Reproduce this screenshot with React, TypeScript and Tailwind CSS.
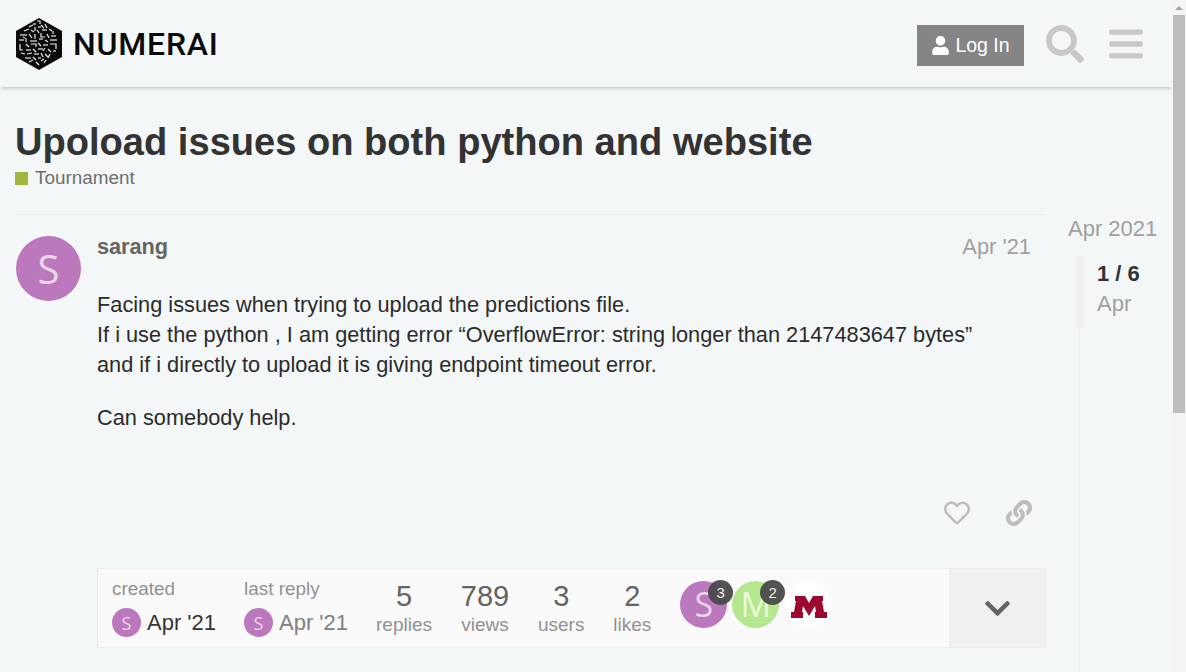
import { FaChevronDown, FaBars, FaLink, FaRegHeart, FaSearch, FaUser } from "react-icons/fa";

const dashes = [
  "M37 21h3v3", "M33 24h3", "M41 25l3 3", "M29 27l4-2", "M35 27v4", "M38 27h3", "M45 24l2 4",
  "M24 31l5-2", "M31 30l3 2", "M37 30l2 3", "M42 30h5", "M49 29l3 2", "M53 31v3",
  "M20 35h7", "M29 34l3 4", "M35 34v5", "M41 33v4h4", "M47 34l2 4", "M51 36h5",
  "M19 40h5", "M26 38v4", "M30 41h7", "M39 39h4", "M45 40l3 2", "M50 40h7", "M23 37l2 1",
  "M20 44v6h3", "M26 44l3 3", "M31 44h5v3", "M38 43l3 3", "M43 45h5", "M50 44h6v5",
  "M26 50h5", "M33 49l3 3", "M38 49h5", "M45 48l-2 3", "M48 49l3 3", "M53 51h3", "M21 53l4 1",
  "M27 54l5-1", "M34 54h5", "M41 53l2 4", "M45 54l3 3", "M50 54l-2 4", "M25 58h6", "M33 57l3 3",
  "M38 58h3", "M29 62l4-2", "M36 62l3 3", "M41 61l3-2", "M46 60l-2 3",
];

function Logo() {
  return (
    <div className="flex items-center gap-[10px]">
      <svg width="48" height="54" viewBox="15 17 48 54">
        <path d="M39 18 62 31v26L39 70 16 57V31Z" fill="#0a0a0a" />
        {dashes.map((d, i) => (
          <path key={i} d={d} stroke="#e8e8e8" strokeWidth="1.2" fill="none" />
        ))}
      </svg>
      <span className="font-['Roboto',sans-serif] text-[32px] font-medium leading-none tracking-[0.8px] text-[#0a0a0a]">
        NUMERAI
      </span>
    </div>
  );
}

function Avatar({ letter, bg, size }: { letter: string; bg: string; size: string }) {
  return (
    <div className={`${size} ${bg} flex shrink-0 items-center justify-center rounded-full font-['Open_Sans',sans-serif] text-white/70`}>
      {letter}
    </div>
  );
}

function Stat({ num, label }: { num: string; label: string }) {
  return (
    <div className="flex flex-col items-center">
      <span className="text-[29px] leading-[32px] text-[#646464]">{num}</span>
      <span className="text-[19px] leading-[26px] text-[#919191]">{label}</span>
    </div>
  );
}

function Poster({ letter, bg, count }: { letter: string; bg: string; count: string }) {
  return (
    <div className="relative">
      <Avatar letter={letter} bg={bg} size="h-[47px] w-[47px] text-[34px]" />
      <span className="absolute -right-[6px] -top-[1px] flex h-[25px] w-[25px] items-center justify-center rounded-full bg-[#4a4a4a]/95 text-[15px] text-[#eeeeee]">
        {count}
      </span>
    </div>
  );
}

export default function App() {
  return (
    <div className="flex h-[672px] w-[1186px] overflow-hidden bg-[#f4f7f8] font-['Liberation_Sans',sans-serif]">
      <div className="w-[1172px] shrink-0">
        <header className="flex h-[87px] items-center justify-between bg-[#f4f7f8] pl-[15px] pr-[27px] shadow-[0_2px_4px_-1px_rgba(0,0,0,0.25)]">
          <Logo />
          <div className="flex items-center">
            <button className="mt-[4px] flex h-[41px] w-[107px] items-center justify-center gap-[5px] bg-[#858585] text-[19.5px] text-white">
              <FaUser className="text-[19px]" />
              Log In
            </button>
            <FaSearch className="ml-[22px] text-[38px] text-[#c8c8c8]" />
            <FaBars className="ml-[23px] text-[38px] text-[#c8c8c8]" />
          </div>
        </header>

        <div className="pl-[15px]">
          <h1 className="mt-[32px] text-[38.1px] font-bold leading-[46px] text-[#333333]">
            Upoload issues on both python and website
          </h1>
          <div className="mt-px flex items-center gap-[7px] text-[18.9px] leading-[24px] text-[#6e6e6e]">
            <span className="h-[13px] w-[13px] bg-[#9eb83b]" />
            Tournament
          </div>

          <div className="mt-[24px] flex">
            <main className="w-[1031px] shrink-0 border-t border-[#e9edef]">
              <div className="flex pt-[21px]">
                <Avatar letter="S" bg="bg-[#bc78bd]" size="ml-px h-[65px] w-[65px] text-[40px]" />
                <div className="ml-4 flex-1">
                  <div className="flex justify-between pr-[15px] text-[21.7px] leading-[22px]">
                    <span className="font-bold text-[#646464]">sarang</span>
                    <span className="text-[21.9px] text-[#a0a0a0]">Apr '21</span>
                  </div>
                  <div className="mt-[32px] text-[21.75px] leading-[30.24px] text-[#2b2b2b]">
                    <p>Facing issues when trying to upload the predictions file.</p>
                    <p>If i use the python , I am getting error “OverflowError: string longer than 2147483647 bytes”</p>
                    <p>and if i directly to upload it is giving endpoint timeout error.</p>
                    <p className="mt-[22px]">Can somebody help.</p>
                  </div>
                  <div className="mt-[67px] flex justify-end gap-[36px] pr-[14px] text-[26px] text-[#bdbdbd]">
                    <FaRegHeart />
                    <FaLink />
                  </div>

                  <div className="mt-[42px] flex h-[80px] border border-[#e9edef] bg-[#fafafa]">
                    <div className="flex flex-1 items-center pl-[14px]">
                      <div className="mb-[1px] w-[132px]">
                        <div className="text-[18.9px] leading-[24px] text-[#919191]">created</div>
                        <div className="mt-[7px] flex items-center gap-[6px] text-[22px] leading-[30px] text-[#333333]">
                          <Avatar letter="S" bg="bg-[#bc78bd]" size="h-[29px] w-[29px] text-[18px]" />
                          Apr '21
                        </div>
                      </div>
                      <div className="mb-[1px] w-[132px]">
                        <div className="text-[18.9px] leading-[24px] text-[#919191]">last reply</div>
                        <div className="mt-[7px] flex items-center gap-[6px] text-[22px] leading-[30px] text-[#808080]">
                          <Avatar letter="S" bg="bg-[#bc78bd]" size="h-[29px] w-[29px] text-[18px]" />
                          Apr '21
                        </div>
                      </div>
                      <div className="mt-[2px] flex gap-[28.8px]">
                        <Stat num="5" label="replies" />
                        <Stat num="789" label="views" />
                        <Stat num="3" label="users" />
                        <Stat num="2" label="likes" />
                      </div>
                      <div className="mb-[6px] ml-[29px] flex gap-[5px]">
                        <Poster letter="S" bg="bg-[#bc78bd]" count="3" />
                        <Poster letter="M" bg="bg-[#b5e88e]" count="2" />
                        <div className="ml-[2px] flex h-[46px] w-[45px] items-center justify-center rounded-full bg-white">
                          <svg width="36" height="22" viewBox="0 0 36 22" className="mt-[5px]">
                            <path d="M4 0H14L18 7 22 0H32V5H31L33 16H36V22H24V16H25L24 10 18 20 12 10 11 16H12V22H0V16H3L5 5H4Z" fill="#9b0a2e" />
                          </svg>
                        </div>
                      </div>
                    </div>
                    <div className="flex w-[96px] items-center justify-center bg-[#eef0f2] pt-[2px] text-[29px] text-[#646464]">
                      <FaChevronDown />
                    </div>
                  </div>
                </div>
              </div>
            </main>

            <aside className="ml-[22px] flex flex-col pt-[1px] text-[22px] text-[#a0a0a0]">
              <span className="leading-[28px]">Apr 2021</span>
              <div className="relative mt-[12px] flex pl-[8px]">
                <div className="h-[74px] w-[8px] rounded-[4px] bg-[#eeeeee]" />
                <div className="ml-[13px] mt-[4px]">
                  <div className="text-[22px] font-bold leading-[30px] text-[#333333]">1 / 6</div>
                  <div className="leading-[30px]">Apr</div>
                </div>
              </div>
              <div className="ml-[11px] h-[400px] w-px bg-[#e9edef]" />
            </aside>
          </div>
        </div>
      </div>

      <div className="flex w-[14px] flex-col bg-[#f4f4f4]">
        <div className="flex h-[15px] items-center justify-center">
          <span className="h-0 w-0 border-x-[4px] border-b-[4px] border-x-transparent border-b-[#a3a3a3]" />
        </div>
        <div className="mx-auto h-[398px] w-[12px] bg-[#bdbdbd]" />
      </div>
    </div>
  );
}
